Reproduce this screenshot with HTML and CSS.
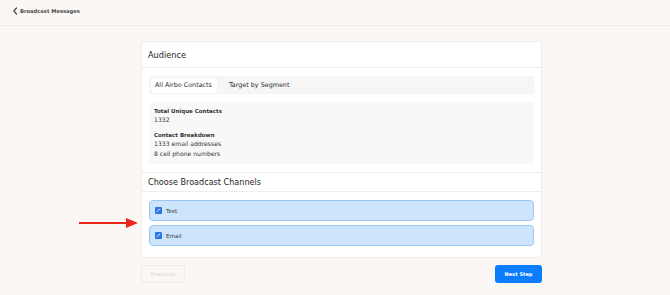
FILE: index.html
```html
<!DOCTYPE html>
<html lang="en">
<head>
    <meta charset="UTF-8">
    <meta name="viewport" content="width=device-width, initial-scale=1.0">
    <title>Broadcast Messages</title>
    <link rel="stylesheet" href="styles.css">
</head>
<body>
    <div class="topbar">
        <svg class="back-icon" width="6" height="8" viewBox="0 0 6 8">
            <path d="M4.5 1 L1.8 4 L4.5 7" fill="none" stroke="#444" stroke-width="1.2" stroke-linecap="round" stroke-linejoin="round"/>
        </svg>
        <span class="topbar-title">Broadcast Messages</span>
    </div>

    <div class="page">
        <div class="card">
            <div class="section">
                <div class="section-head head-lg">Audience</div>
                <div class="section-body">
                    <div class="tabs">
                        <div class="tab active">All Airbo Contacts</div>
                        <div class="tab">Target by Segment</div>
                    </div>
                    <div class="stats">
                        <div class="stat-label">Total Unique Contacts</div>
                        <div class="stat-value">1332</div>
                        <div class="stat-label stat-gap">Contact Breakdown</div>
                        <div class="stat-value">1333 email addresses</div>
                        <div class="stat-value">8 cell phone numbers</div>
                    </div>
                </div>
            </div>

            <div class="section channels">
                <div class="section-head">Choose Broadcast Channels</div>
                <div class="section-body body-last">
                    <label class="channel">
                        <span class="check">
                            <svg width="5" height="5" viewBox="0 0 5 5"><path d="M1 3.6 L3.9 1" stroke="#fff" stroke-width="0.9" stroke-linecap="round"/></svg>
                        </span>
                        Text
                    </label>
                    <label class="channel">
                        <span class="check">
                            <svg width="5" height="5" viewBox="0 0 5 5"><path d="M1 3.6 L3.9 1" stroke="#fff" stroke-width="0.9" stroke-linecap="round"/></svg>
                        </span>
                        Email
                    </label>
                    <!-- annotation arrow -->
                    <svg class="pointer" width="62" height="12" viewBox="0 0 62 12">
                        <line x1="1" y1="6" x2="50" y2="6" stroke="#e8261c" stroke-width="2"/>
                        <polygon points="48,1 60,6 48,11" fill="#e8261c"/>
                    </svg>
                </div>
            </div>
        </div>

        <div class="actions">
            <button class="btn btn-ghost">Previous</button>
            <button class="btn btn-primary">Next Step</button>
        </div>
    </div>
</body>
</html>
```

FILE: styles.css
```css
* {
    margin: 0;
    padding: 0;
    box-sizing: border-box;
}

body {
    font-family: 'DejaVu Sans', Verdana, sans-serif;
    background: #fbf7f4;
    color: #333;
    min-height: 100vh;
}

.topbar {
    height: 26px;
    display: flex;
    align-items: center;
    padding: 0 0 3px 12px;
    border-bottom: 1px solid #f1ece8;
}

.back-icon {
    margin-right: 2px;
}

.topbar-title {
    font-size: 5.2px;
    font-weight: 700;
    color: #4a4a4a;
}

.page {
    width: 401px;
    margin: 15px 0 0 141px;
}

.card {
    background: #fff;
    border: 1px solid #efebe8;
    border-radius: 3px;
}

.section {
    border-bottom: 1px solid #f0edeb;
}

.section:last-child {
    border-bottom: none;
}

.section-head {
    height: 19px;
    display: flex;
    align-items: center;
    padding: 0 6px;
    font-size: 8.1px;
    color: #262626;
    border-bottom: 1px solid #f0edeb;
}

.head-lg {
    height: 26px;
    font-size: 8.2px;
}

.section-body {
    padding: 8px 7px;
}

.body-last {
    padding-bottom: 11px;
    position: relative;
}

.tabs {
    display: flex;
    align-items: center;
    height: 18px;
    padding: 0 2px;
    background: #f6f6f6;
    border-radius: 3px;
    box-shadow: 0 0 1px rgba(0,0,0,0.08);
}

.tab {
    font-size: 6.4px;
    color: #2e2e2e;
    height: 15px;
    display: flex;
    align-items: center;
}

.tab.active {
    background: #fff;
    border-radius: 3px;
    width: 66px;
    padding-left: 4px;
    margin-right: 12px;
    box-shadow: 0 0 1px rgba(0,0,0,0.12);
}

.stats {
    margin-top: 8px;
    height: 62px;
    background: #f8f8f8;
    border-radius: 3px;
    padding: 5px 5px;
}

.stat-label {
    font-size: 5.5px;
    font-weight: 700;
    color: #333;
    line-height: 8px;
}

.stat-gap {
    margin-top: 6px;
}

.stat-value {
    font-size: 6.1px;
    color: #333;
    line-height: 10px;
}

.channel {
    display: flex;
    align-items: center;
    height: 21px;
    margin-bottom: 4px;
    padding-left: 5px;
    background: #cde4fd;
    border: 1px solid #9dc6f6;
    border-radius: 4px;
    font-size: 5.6px;
    color: #333;
}

.channel:last-of-type {
    margin-bottom: 0;
}

.check {
    width: 7px;
    height: 7px;
    margin-right: 4px;
    background: #2d74e6;
    border-radius: 1px;
    display: flex;
    align-items: center;
    justify-content: center;
}

.pointer {
    position: absolute;
    left: -64px;
    top: 25px;
}

.actions {
    display: flex;
    justify-content: space-between;
    margin-top: 7px;
}

.btn {
    height: 18px;
    border-radius: 3px;
    font-family: inherit;
    font-size: 5px;
    font-weight: 700;
    cursor: pointer;
}

.btn-ghost {
    width: 44px;
    background: #fbf7f4;
    border: 1px solid #efebe8;
    color: #e6e2df;
}

.btn-primary {
    width: 47px;
    background: #0a7dff;
    border: none;
    color: #fff;
}
```
